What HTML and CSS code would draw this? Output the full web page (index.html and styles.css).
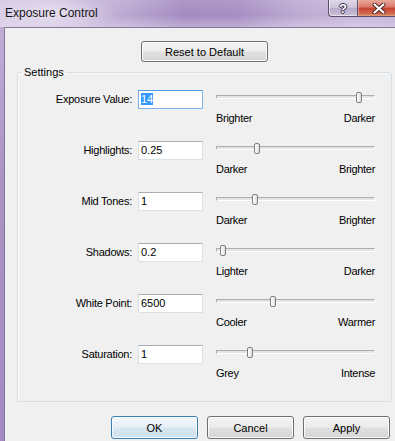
FILE: index.html
```html
<!DOCTYPE html>
<html lang="en">
<head>
<meta charset="utf-8">
<title>Exposure Control</title>
<link rel="stylesheet" href="styles.css">
</head>
<body>
<div class="window">
  <div class="titlebar">
    <div class="title">Exposure Control</div>
    <div class="caption-buttons">
      <div class="cap-btn help">?</div>
      <div class="cap-btn close">
        <svg width="14" height="11" viewBox="0 0 14 11">
          <path d="M2.5 1.5 L11.5 9.5 M11.5 1.5 L2.5 9.5" stroke="#4a2020" stroke-width="4" stroke-linecap="round" fill="none"/>
          <path d="M2.5 1.5 L11.5 9.5 M11.5 1.5 L2.5 9.5" stroke="#ffffff" stroke-width="2.2" stroke-linecap="round" fill="none"/>
        </svg>
      </div>
    </div>
  </div>
  <div class="client">
    <div class="reset-row">
      <button class="btn reset">Reset to Default</button>
    </div>
    <fieldset class="group">
      <legend>Settings</legend>
      <div class="rows">
        <div class="row">
          <div class="field-label">Exposure Value:</div>
          <div class="field focused"><span class="sel">14</span></div>
          <div class="slider">
            <div class="track-area"><div class="channel"></div><div class="thumb" style="left:140px"></div></div>
            <div class="scale"><span>Brighter</span><span>Darker</span></div>
          </div>
        </div>
        <div class="row">
          <div class="field-label">Highlights:</div>
          <div class="field">0.25</div>
          <div class="slider">
            <div class="track-area"><div class="channel"></div><div class="thumb" style="left:38px"></div></div>
            <div class="scale"><span>Darker</span><span>Brighter</span></div>
          </div>
        </div>
        <div class="row">
          <div class="field-label">Mid Tones:</div>
          <div class="field">1</div>
          <div class="slider">
            <div class="track-area"><div class="channel"></div><div class="thumb" style="left:36px"></div></div>
            <div class="scale"><span>Darker</span><span>Brighter</span></div>
          </div>
        </div>
        <div class="row">
          <div class="field-label">Shadows:</div>
          <div class="field">0.2</div>
          <div class="slider">
            <div class="track-area"><div class="channel"></div><div class="thumb" style="left:4px"></div></div>
            <div class="scale"><span>Lighter</span><span>Darker</span></div>
          </div>
        </div>
        <div class="row">
          <div class="field-label">White Point:</div>
          <div class="field">6500</div>
          <div class="slider">
            <div class="track-area"><div class="channel"></div><div class="thumb" style="left:54px"></div></div>
            <div class="scale"><span>Cooler</span><span>Warmer</span></div>
          </div>
        </div>
        <div class="row">
          <div class="field-label">Saturation:</div>
          <div class="field">1</div>
          <div class="slider">
            <div class="track-area"><div class="channel"></div><div class="thumb" style="left:31px"></div></div>
            <div class="scale"><span>Grey</span><span>Intense</span></div>
          </div>
        </div>
      </div>
    </fieldset>
    <div class="dialog-buttons">
      <button class="btn default">OK</button>
      <button class="btn">Cancel</button>
      <button class="btn">Apply</button>
    </div>
  </div>
</div>
</body>
</html>
```

FILE: styles.css
```css
html, body {
  margin: 0;
  padding: 0;
}
body {
  width: 395px;
  height: 441px;
  overflow: hidden;
  background: #f0f0f0;
  font-family: "Liberation Sans", Arial, sans-serif;
  font-size: 11px;
  color: #000;
}
.window {
  width: 395px;
  height: 441px;
  overflow: hidden;
  background: linear-gradient(to bottom, #c4b2d9 0%, #ab93c6 40%, #a48ac1 100%);
}
.titlebar {
  width: 409px;
  height: 27px;
  box-sizing: border-box;
  display: flex;
  align-items: flex-start;
  padding-right: 9px;
  background:
    radial-gradient(ellipse 70px 16px at 50px 13px, rgba(240, 234, 246, 0.75), rgba(240, 234, 246, 0)),
    linear-gradient(to bottom, rgba(255, 255, 255, 0.12) 0%, rgba(255, 255, 255, 0) 55%, rgba(255, 255, 255, 0.28) 100%),
    linear-gradient(to right, #d3c7e3 0%, #cdbfdf 15%, #b9a5d0 32%, #a38ac0 45%, #a68dc2 58%, #bca8d2 72%, #c7b6da 86%, #c3b1d7 100%);
}
.title {
  padding: 6px 0 0 5px;
  font-size: 12px;
  line-height: 14px;
  color: #151515;
}
.caption-buttons {
  margin-left: auto;
  display: flex;
}
.cap-btn {
  height: 17px;
  box-sizing: border-box;
  border: 1px solid #5b4f6e;
  border-top: none;
  display: flex;
  align-items: center;
  justify-content: center;
}
.help {
  width: 29px;
  border-radius: 0 0 0 4px;
  border-right: none;
  background: linear-gradient(to bottom, #e0d8ea 0%, #cbc0d8 50%, #b7a9c9 50%, #c9bfd6 100%);
  box-shadow: inset 1px 0 0 rgba(255, 255, 255, 0.6), inset 0 -1px 0 rgba(255, 255, 255, 0.5);
  color: #fff;
  font-weight: bold;
  font-size: 13px;
  line-height: 15px;
  text-shadow: 0 0 1px #2d2540, 1px 0 0 #3a3050, -1px 0 0 #3a3050, 0 1px 0 #3a3050, 0 -1px 0 #3a3050;
}
.close {
  width: 43px;
  border-radius: 0 0 4px 0;
  background: linear-gradient(to bottom, #e8a79a 0%, #d9786a 45%, #c73f2e 50%, #d26a50 85%, #e3a07a 100%);
  box-shadow: inset 1px 0 0 rgba(255, 255, 255, 0.35);
}
.client {
  margin-left: 4px;
  width: 399px;
  height: 413px;
  border-top: 1px solid #85789c;
  border-left: 1px solid #85789c;
  background: #f0f0f0;
}
.reset-row {
  padding-top: 13px;
  display: flex;
  justify-content: center;
}
.btn {
  box-sizing: border-box;
  font-family: "Liberation Sans", Arial, sans-serif;
  font-size: 11px;
  color: #000;
  border: 1px solid #707070;
  border-radius: 3px;
  background: linear-gradient(to bottom, #f4f4f4 0%, #ececec 48%, #e0e0e0 52%, #d6d6d6 100%);
  box-shadow: inset 0 0 0 1px #fbfbfb;
  padding: 0;
  margin: 0;
}
.reset {
  width: 127px;
  height: 21px;
}
.group {
  margin: 4px 12px 0 12px;
  padding: 0;
  border: 1px solid #d5dfe5;
  border-radius: 3px;
  box-shadow: inset 1px 1px 0 #fafafa;
}
.group legend {
  margin-left: 4px;
  padding: 0 2px;
  line-height: 13px;
  font-size: 11px;
}
.rows {
  display: flex;
  flex-direction: column;
  gap: 16px;
  padding: 11px 0 21px 0;
}
.row {
  display: grid;
  grid-template-columns: 114px 65px 159px;
  column-gap: 6px;
  align-items: start;
}
.field-label {
  text-align: right;
  line-height: 19px;
  letter-spacing: -0.25px;
}
.field {
  box-sizing: border-box;
  height: 19px;
  border: 1px solid #dbdfe6;
  border-top-color: #abadb3;
  background: #fff;
  padding-left: 2px;
  line-height: 17px;
}
.field.focused {
  border-color: #7eb4ea;
  border-top-color: #569de5;
}
.sel {
  background: #3399ff;
  color: #fff;
}
.slider {
  margin-left: 7px;
  width: 159px;
}
.track-area {
  position: relative;
  height: 19px;
}
.channel {
  position: relative;
  top: 5px;
  height: 2px;
  border: 1px solid;
  border-color: #adadad #ffffff #ffffff #adadad;
  background: #e4e4e4;
}
.thumb {
  position: absolute;
  top: 2px;
  width: 6px;
  height: 11px;
  box-sizing: border-box;
  border: 1px solid #7f7f7f;
  border-radius: 2px;
  background: linear-gradient(to right, #ffffff 0%, #f0f0f0 50%, #dadada 100%);
}
.scale {
  margin-top: 3px;
  display: flex;
  justify-content: space-between;
  line-height: 13px;
  letter-spacing: -0.3px;
}
.dialog-buttons {
  margin-top: 14px;
  padding-right: 14px;
  display: flex;
  justify-content: flex-end;
  gap: 9px;
}
.dialog-buttons .btn {
  width: 87px;
  height: 23px;
}
.btn.default {
  border-color: #3c7fb1;
  background: linear-gradient(to bottom, #f2f8fc 0%, #e6f0f7 48%, #d8e7f1 52%, #cde1ee 100%);
  box-shadow: inset 0 0 0 1px #f6fbfe;
}
```
